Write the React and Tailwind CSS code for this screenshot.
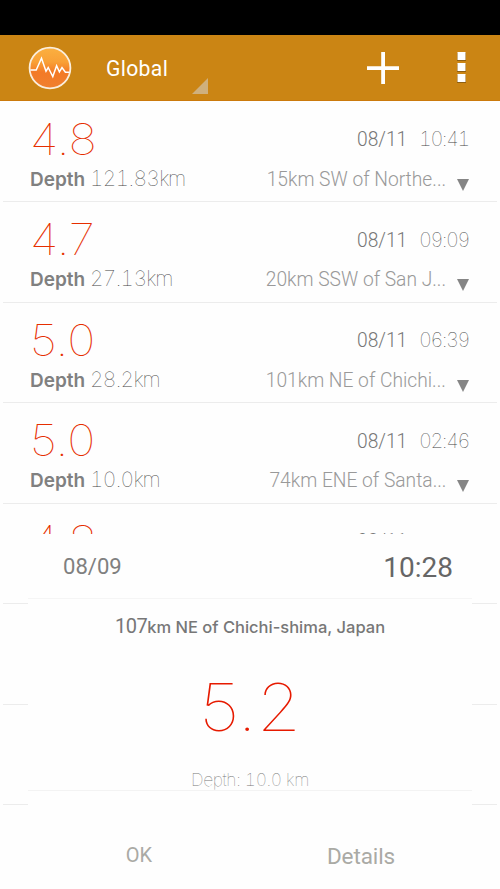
import React from 'react';

const quakes = [
  { id: 1, mag: '4.8', depth: '121.83', date: '08/11', time: '10:41', place: '15km SW of Northe...' },
  { id: 2, mag: '4.7', depth: '27.13', date: '08/11', time: '09:09', place: '20km SSW of San J...' },
  { id: 3, mag: '5.0', depth: '28.2', date: '08/11', time: '06:39', place: '101km NE of Chichi...' },
  { id: 4, mag: '5.0', depth: '10.0', date: '08/11', time: '02:46', place: '74km ENE of Santa...' },
  { id: 5, mag: '4.8', date: '08/11' },
  { id: 6 },
  { id: 7 },
];

function AppIcon() {
  return (
    <svg width="44" height="44" viewBox="0 0 44 44" fill="none">
      <defs>
        <linearGradient id="disc" x1="0" y1="0" x2="0" y2="1">
          <stop offset="0" stopColor="#fbb040" />
          <stop offset="0.35" stopColor="#f9a137" />
          <stop offset="0.6" stopColor="#f37a26" />
          <stop offset="1" stopColor="#f08030" />
        </linearGradient>
      </defs>
      <circle cx="22" cy="22" r="20.4" fill="url(#disc)" stroke="#fbeedd" strokeWidth="1.8" />
      <path d="M2.5 24H8.2L13.5 12.3L18 25.3L20.2 21.5L24.8 30.5L28.6 19.8L31.4 25.8L34 21.5L37.4 26.3H41.5" stroke="#fff" strokeWidth="1.5" />
    </svg>
  );
}

function Header() {
  return (
    <header className="flex h-[66px] shrink-0 items-start border-b border-[#cb7a0c] bg-[#cb8514]">
      <div className="pl-7 pt-[11px]"><AppIcon /></div>
      <div className="ml-[34px] flex h-[59px] w-[102px] items-end justify-between">
        <span className="w-[70px] origin-left scale-x-[0.94] pb-[12px] font-['Roboto',sans-serif] text-[22.5px] leading-[27px] tracking-[0.35px] text-white">Global</span>
        <svg width="16" height="16" viewBox="0 0 16 16"><path d="M16 0V16H0Z" fill="#cfb07d" /></svg>
      </div>
      <svg className="ml-[159px] mt-[17px]" width="32" height="32" viewBox="0 0 32 32">
        <path d="M14.2 0H18V14.2H32V18H18V32H14.2V18H0V14.2H14.2Z" fill="#fff" />
      </svg>
      <svg className="ml-[58px] mt-[17px]" width="9" height="33" viewBox="0 0 9 33">
        <path d="M0 1H9V9H0ZM0 12H9V20H0ZM0 23H9V31H0Z" fill="#8f5f12" />
        <path d="M0.5 0H8.5V8H0.5ZM0.5 11H8.5V19H0.5ZM0.5 22H8.5V30H0.5Z" fill="#fff" />
      </svg>
    </header>
  );
}

function QuakeRow({ quake }) {
  return (
    <li className="mx-[3px] flex h-[100.5px] shrink-0 justify-between border-b border-[#ececec] pl-[27px] pr-[27px]">
      {quake.mag && (
        <>
          <div className="flex flex-col pt-[13px]">
            <span className="h-[48px] w-[58px] origin-left scale-x-[1.08] font-['Inter',sans-serif] text-[44px] font-thin leading-[48px] text-[#e62e00]">{quake.mag}</span>
            {quake.depth && (
              <div className="mt-px flex items-baseline leading-[30px]">
                <span className="w-[60px] font-['Inter',sans-serif] text-[19px] font-semibold text-[#808080]">Depth</span>
                <span className="font-['Inter',sans-serif] text-[21px] font-thin tabular-nums tracking-[-0.7px] text-[#444]">
                  {quake.depth}<span className="tracking-[-1.3px]">km</span>
                </span>
              </div>
            )}
          </div>
          <div className="flex flex-col items-end pt-[22.5px]">
            <div className="flex h-[30px] items-baseline leading-[30px]">
              <span className="w-[52px] origin-left scale-x-[0.96] font-['Roboto',sans-serif] text-[20px] font-light text-[#777]">{quake.date}</span>
              <span className="flex w-[61px] justify-end pr-px font-['Inter',sans-serif] text-[20px] font-thin tabular-nums tracking-[-1.4px] text-[#444]">{quake.time || '\u00a0'}</span>
            </div>
            {quake.place && (
              <div className="mt-[9.5px] flex h-[30px] items-center pr-px">
                <span className="origin-right scale-x-[0.915] font-['Roboto',sans-serif] text-[21px] font-light leading-[30px] text-[#999]">{quake.place}</span>
                <svg className="ml-[11px] mt-[12.5px]" width="12" height="12" viewBox="0 0 12 12"><path d="M0 0H12L6 12Z" fill="#858585" /></svg>
              </div>
            )}
          </div>
        </>
      )}
    </li>
  );
}

function DetailDialog() {
  return (
    <section className="absolute left-7 top-[534px] flex h-[355px] w-[444px] flex-col bg-[#fefefe]">
      <div className="flex h-[65px] items-center justify-between border-b border-[#f5f5f5] pl-[35px] pr-[19px] font-['Roboto',sans-serif]">
        <span className="origin-left scale-x-[0.98] pt-[2px] text-[22.5px] text-[#808080]">08/09</span>
        <span className="pt-[3px] text-[28px] text-[#666]">10:28</span>
      </div>
      <div className="flex h-[192px] flex-col items-center border-b border-[#f3f3f3]">
        <p className="mt-[15px] whitespace-nowrap font-['Inter',sans-serif] text-[16.5px] font-[450] leading-6 text-[#777]">
          <span className="font-['Roboto',sans-serif] text-[20px] font-normal tracking-[-0.5px]">107</span>km NE of Chichi-shima, Japan
        </p>
        <p className="mt-[28px] scale-x-[1.08] font-['Inter',sans-serif] text-[66px] font-thin leading-[80px] text-[#e61a00]">5.2</p>
        <p className="mt-[21px] font-['Inter',sans-serif] text-[17.5px] font-thin tabular-nums leading-6 tracking-[-0.4px] text-[#777]">Depth: 10.0 km</p>
      </div>
      <div className="flex flex-1 font-['Roboto',sans-serif] text-[#aaaaa5]">
        <button className="flex w-1/2 justify-center pt-[49px] text-[20px] leading-[30px]">OK</button>
        <button className="flex w-1/2 justify-center pt-[50px] text-[22.5px] leading-[30px] tracking-[-0.1px]">Details</button>
      </div>
    </section>
  );
}

export default function App() {
  return (
    <div className="relative flex h-[889px] w-[500px] flex-col overflow-hidden bg-[#fefefe]">
      <div className="h-[35px] shrink-0 bg-black" />
      <Header />
      <ul className="flex flex-col pt-[0.5px]">
        {quakes.map((quake) => <QuakeRow key={quake.id} quake={quake} />)}
      </ul>
      <DetailDialog />
    </div>
  );
}
